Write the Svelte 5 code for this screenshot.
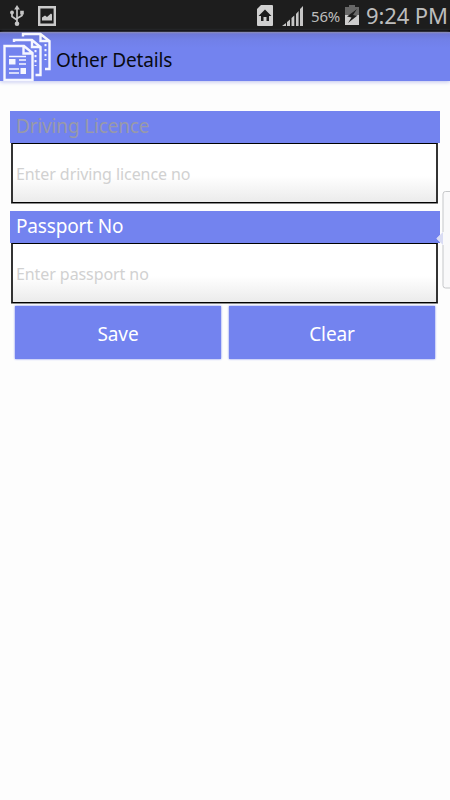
<script>
  const fields = [
    { name: 'licence', label: 'Driving Licence', hint: 'Enter driving licence no', muted: true },
    { name: 'passport', label: 'Passport No', hint: 'Enter passport no', muted: false }
  ]

  let values = $state({ licence: '', passport: '' })

  const clear = () => {
    values.licence = ''
    values.passport = ''
  }
</script>

<div class='screen'>
  <div class='status-bar'>
    <svg class='usb' width='14' height='22' viewBox='0 0 14 22'>
      <path d='M7 3v15M2 8v3.500l5 3.500M12 8v2.500L7 13.500' fill='none' stroke='#c6c6c6' stroke-width='1.700' />
      <path d='M7 0l2.800 4.500H4.200z' fill='#c6c6c6' />
      <circle cx='2' cy='7.500' r='1.900' fill='#c6c6c6' />
      <path d='M10.200 5.800h3.600v3.600h-3.600z' fill='#c6c6c6' />
      <circle cx='7' cy='18.800' r='2.300' fill='#c6c6c6' />
    </svg>
    <svg class='picture' width='18' height='20' viewBox='0 0 18 20'>
      <path d='M1.200 1.200h15.600v17.600H1.200z' fill='none' stroke='#cacaca' stroke-width='2.400' />
      <path d='M4 14.500v-3l3-2 2 1.500 4-3.500 1 1v6z' fill='#cacaca' />
    </svg>
    <div class='spacer'></div>
    <svg class='sim' width='16' height='21' viewBox='0 0 16 21'>
      <path d='M4 0h11a1 1 0 0 1 1 1v19a1 1 0 0 1-1 1H1a1 1 0 0 1-1-1V4z' fill='#d0d0d0' />
      <path d='M8 4.500l6.500 6.500H12v5H9.500v-4h-3v4H4v-5H1.500z' fill='#1d1d1d' />
    </svg>
    <svg class='signal' width='21' height='20' viewBox='0 0 21 20'>
      <path d='M0 20l4-3V20zM5 16l3-2.500V20H5zM9.500 12l2.800-2.500V20H9.500zM14 8l2.600-3v15H14zM18 3l3-3v20h-3z' fill='#c6c6c6' />
    </svg>
    <span class='percent'>56%</span>
    <svg class='battery' width='14' height='20' viewBox='0 0 14 20'>
      <path d='M4 0h6v2h4v8H0V2h4z' fill='#686868' />
      <path d='M0 10h14v10H0z' fill='#cdcdcd' />
      <path d='M12 4L2 11.500l4.500 1L3 18l9.500-7.500-4.500-.5z' fill='#1d1d1d' />
    </svg>
    <span class='clock'>9:24 PM</span>
  </div>

  <header class='title-bar'>
    <svg class='logo' width='50' height='50' viewBox='0 0 50 50'>
      <g fill='none' stroke='#f6f7ff' stroke-width='2.400'>
        <path d='M22 4.500V2h17.500l9 7v28H44M39.500 2v7h9' />
        <path d='M13 10V8h18l8.500 7v28H34.500M31 8v7h8.500' />
        <path d='M3.500 14H23l8.500 7v27h-28zM22.500 14v7.500h9' />
        <path d='M34.500 18v16M44.500 12v16' stroke-dasharray='2.200 2.800' stroke-width='2' />
        <path d='M8 24.500h17M18 28h7M18 32h7M8 37h10M8 41h10' stroke-width='1.500' />
      </g>
      <path d='M8 27h6.500v5.500H8zM19.500 36h5.500v6h-5.500z' fill='#f6f7ff' />
    </svg>
    <h1>Other Details</h1>
  </header>

  <main>
    {#each fields as field}
      <div class='field'>
        <label class:muted={field.muted} for={field.name}>{field.label}</label>
        <input class={field.name} id={field.name} placeholder={field.hint} bind:value={values[field.name]} />
      </div>
    {/each}
    <div class='actions'>
      <button>Save</button>
      <button onclick={clear}>Clear</button>
    </div>
  </main>

  <svg class='edge-handle' width='15' height='98' viewBox='0 0 15 98'>
    <path d='M15 .5h-4.500q-2.500 0-2.500 2.500v38l-6.500 6.500 6.500 6.500v40.500q0 2.500 2.500 2.500H15z' fill='#f9f9fa' />
    <path d='M15 .5h-4.500q-2.500 0-2.500 2.500v38M8 54v40.500q0 2.500 2.500 2.500H15' fill='none' stroke='#c5c7c9' />
    <path d='M8 41l-6.500 6.500L8 54' fill='#d9dcf4' />
  </svg>
</div>

<style>
  :global(body) {
    background: #fdfdfd;
  }

  .screen {
    position: relative;
    width: 450px;
    height: 800px;
    overflow: hidden;
    background: #fdfdfd;
    font-family: "Noto Sans", sans-serif;
  }

  .status-bar {
    display: flex;
    align-items: flex-start;
    box-sizing: border-box;
    height: 32px;
    background: #1d1d1d;
    border-bottom: 2px solid #000;
    color: #bdbdbd;
  }

  .usb {
    margin: 5px 0 0 10px;
  }

  .picture {
    margin: 6px 0 0 14px;
  }

  .spacer {
    flex: 1;
  }

  .sim {
    margin: 5px 9px 0 0;
  }

  .signal {
    margin: 6px 8px 0 0;
  }

  .percent {
    width: 34px;
    font-size: 15px;
    line-height: 32px;
    letter-spacing: -0.2px;
  }

  .battery {
    margin: 5px 7px 0 0;
  }

  .clock {
    width: 84px;
    font-size: 22px;
    line-height: 30px;
    letter-spacing: -0.1px;
    white-space: nowrap;
  }

  .title-bar {
    display: flex;
    height: 49px;
    background: linear-gradient(#8c8db3 0, #6d78d8 2px, #7180e8 8px, #7383ef 16px);
    box-shadow: 0 1px 4px #bdc2ee;
  }

  .logo {
    margin-left: 1px;
  }

  h1 {
    margin: 0 0 0 5px;
    font-size: 19px;
    font-weight: 400;
    line-height: 57px;
    letter-spacing: -0.13px;
    color: #080a12;
  }

  main {
    padding: 30px 10px 0;
  }

  .field {
    height: 100px;
  }

  label {
    display: block;
    box-sizing: border-box;
    height: 32px;
    padding-left: 6px;
    background: #7383ef;
    font-size: 19px;
    line-height: 30px;
    letter-spacing: -0.17px;
    color: #fff;
  }

  .muted {
    color: #999aa8;
  }

  input {
    display: block;
    box-sizing: border-box;
    width: 427px;
    height: 60px;
    margin: 0 0 0 1px;
    padding: 2px 3px 0;
    border: 1px solid #000;
    border-left: 2px solid #333;
    border-right: 2px solid #333;
    border-radius: 0;
    outline: none;
    background: linear-gradient(#fff 55%, #ebebeb);
    box-shadow: 0 1px 0 #8a8a8a;
    font: 16px "Noto Sans", sans-serif;
    letter-spacing: -0.08px;
  }

  input::placeholder {
    color: #d1d1d1;
    opacity: 1;
  }

  .actions {
    display: flex;
    gap: 8px;
    padding: 0 5px;
    margin-top: -5px;
  }

  button {
    flex: 1;
    height: 53px;
    padding: 2px 0 0;
    border: none;
    background: #7383ef;
    box-shadow: 0 0 2px #7383ef;
    font: 19px "Noto Sans", sans-serif;
    letter-spacing: -0.1px;
    color: #fff;
  }

  .edge-handle {
    position: absolute;
    top: 191px;
    right: 0;
  }
</style>
